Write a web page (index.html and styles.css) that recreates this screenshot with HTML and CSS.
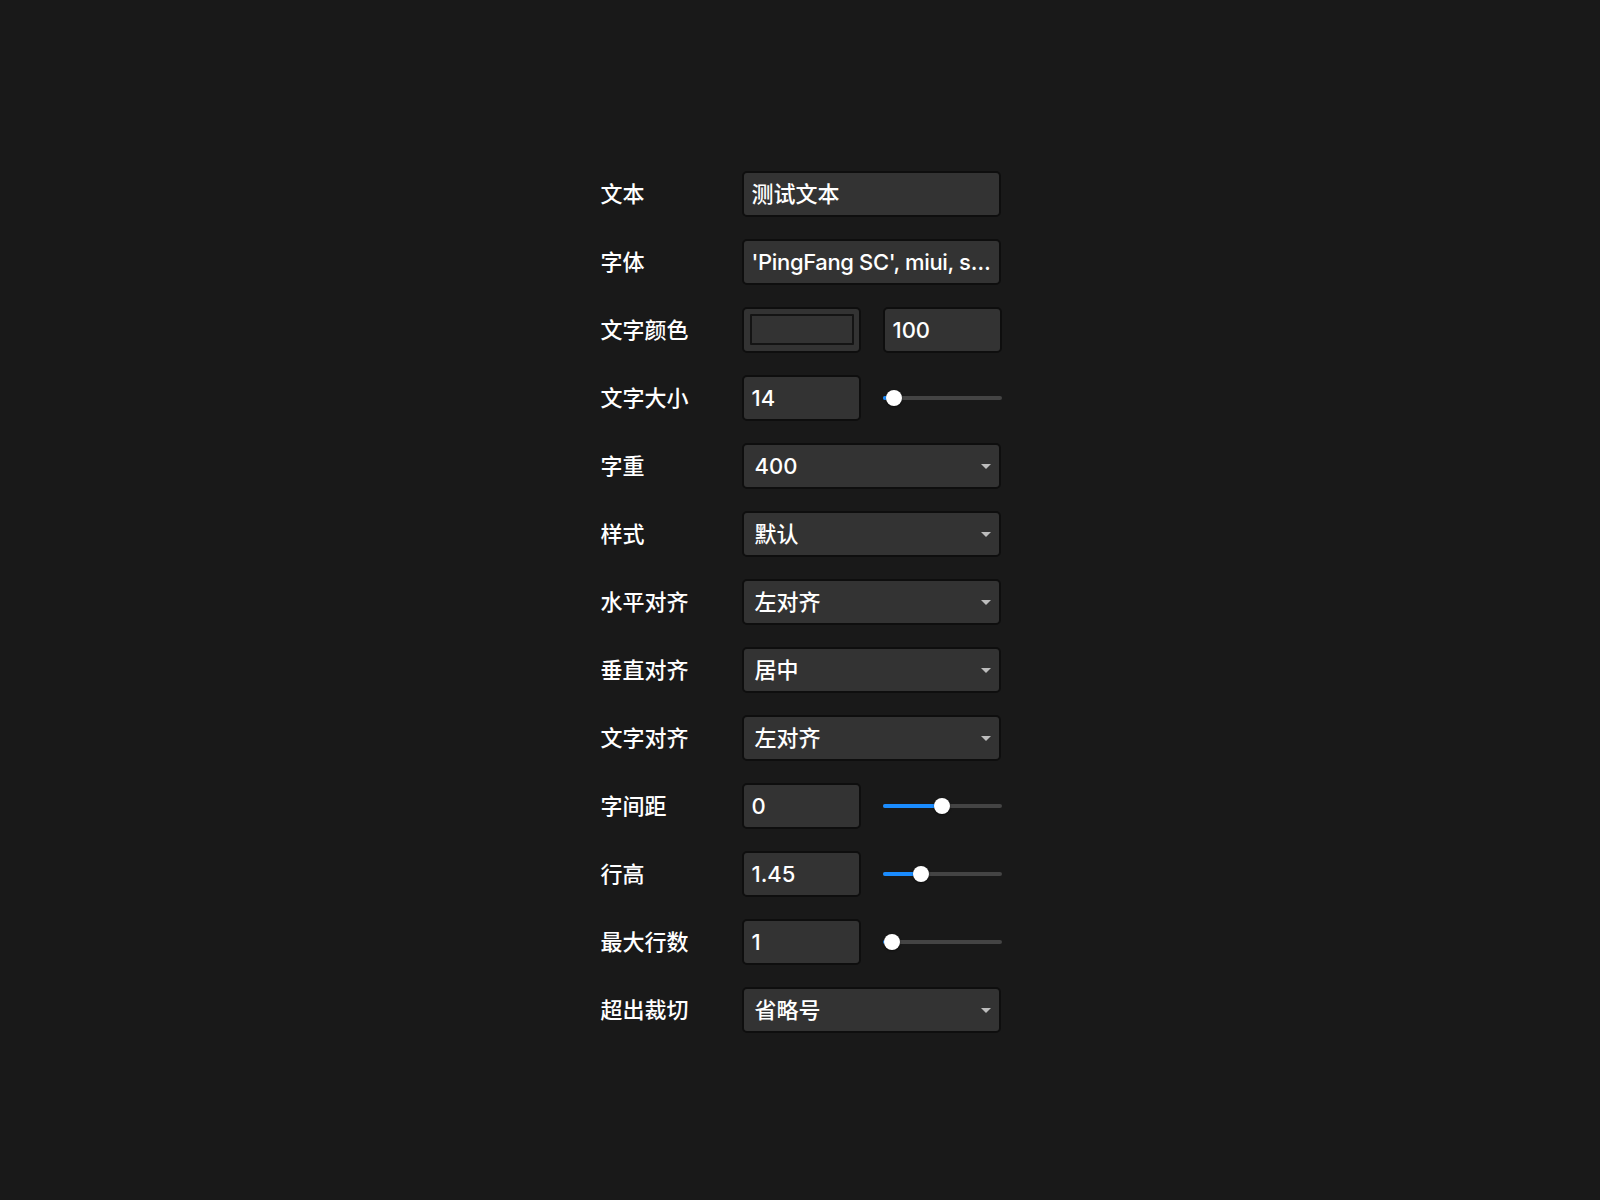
FILE: index.html
```html
<!DOCTYPE html>
<html lang="zh-CN">
<head>
<meta charset="utf-8">
<link rel="stylesheet" href="styles.css">
</head>
<body>
<div class="page">
  <div class="form">
    <div class="row"><div class="label">文本</div><div class="field"><div class="box input">测试文本</div></div></div>
    <div class="row"><div class="label">字体</div><div class="field"><div class="box input tight">'PingFang SC', miui, sans-serif</div></div></div>
    <div class="row"><div class="label">文字颜色</div><div class="field split"><div class="box swatch-box"><div class="swatch"></div></div><div class="box input">100</div></div></div>
    <div class="row"><div class="label">文字大小</div><div class="field split"><div class="box input">14</div><div class="slider" style="--p:0.03"><div class="track"><div class="fill"></div><div class="thumb"></div></div></div></div></div>
    <div class="row"><div class="label">字重</div><div class="field"><div class="box select"><span>400</span><i class="caret"></i></div></div></div>
    <div class="row"><div class="label">样式</div><div class="field"><div class="box select"><span>默认</span><i class="caret"></i></div></div></div>
    <div class="row"><div class="label">水平对齐</div><div class="field"><div class="box select"><span>左对齐</span><i class="caret"></i></div></div></div>
    <div class="row"><div class="label">垂直对齐</div><div class="field"><div class="box select"><span>居中</span><i class="caret"></i></div></div></div>
    <div class="row"><div class="label">文字对齐</div><div class="field"><div class="box select"><span>左对齐</span><i class="caret"></i></div></div></div>
    <div class="row"><div class="label">字间距</div><div class="field split"><div class="box input">0</div><div class="slider" style="--p:0.5"><div class="track"><div class="fill"></div><div class="thumb"></div></div></div></div></div>
    <div class="row"><div class="label">行高</div><div class="field split"><div class="box input">1.45</div><div class="slider" style="--p:0.3"><div class="track"><div class="fill"></div><div class="thumb"></div></div></div></div></div>
    <div class="row"><div class="label">最大行数</div><div class="field split"><div class="box input">1</div><div class="slider" style="--p:0.01"><div class="track"><div class="fill"></div><div class="thumb"></div></div></div></div></div>
    <div class="row"><div class="label">超出裁切</div><div class="field"><div class="box select"><span>省略号</span><i class="caret"></i></div></div></div>
  </div>
</div>
</body>
</html>
```
FILE: styles.css
```css
html, body {
  margin: 0;
  padding: 0;
  background: #191919;
}
body {
  font-family: "Inter", "Noto Sans CJK SC", sans-serif;
  color: #ffffff;
  font-size: 22px;
  font-weight: 500;
}
.page {
  width: 1600px;
  height: 1200px;
  display: flex;
  justify-content: center;
  padding-top: 171px;
  box-sizing: border-box;
}
.form {
  width: 400px;
  margin-left: 1px;
  display: flex;
  flex-direction: column;
  gap: 22px;
}
.row {
  display: flex;
  align-items: center;
  height: 46px;
}
.label {
  width: 141px;
  flex: none;
  white-space: nowrap;
  line-height: 1;
}
.field {
  flex: 1;
  display: flex;
  height: 46px;
  min-width: 0;
}
.field.split {
  gap: 22px;
}
.field.split > * {
  width: 119px;
  flex: none;
}
.box {
  box-sizing: border-box;
  height: 46px;
  border: 2px solid #0e0e0e;
  border-radius: 5px;
  background: #333333;
  display: flex;
  align-items: center;
  min-width: 0;
  flex: 1;
}
.input {
  padding: 0 6px 0 8px;
  white-space: nowrap;
  overflow: hidden;
  text-overflow: ellipsis;
  display: block;
  line-height: 42px;
}
.input.tight {
  letter-spacing: -0.35px;
}
.select {
  padding: 0 8px 0 11px;
  justify-content: space-between;
}
.select span {
  line-height: 42px;
  height: 42px;
}
.caret {
  width: 0;
  height: 0;
  border-left: 5px solid transparent;
  border-right: 5px solid transparent;
  border-top: 5px solid #bdbdbd;
}
.swatch-box {
  padding: 5px 5px 6px 6px;
}
.swatch {
  width: 100%;
  height: 100%;
  box-sizing: border-box;
  border: 2px solid #141414;
  background: #333333;
  border-radius: 1px;
}
.slider {
  display: flex;
  align-items: center;
}
.track {
  position: relative;
  width: 100%;
  height: 4px;
  border-radius: 2px;
  background: #444444;
}
.fill {
  position: absolute;
  left: 0;
  top: 0;
  height: 4px;
  border-radius: 2px;
  background: #1a8cff;
  width: calc(8px + var(--p) * (100% - 16px));
}
.thumb {
  position: absolute;
  top: 50%;
  left: calc(8px + var(--p) * (100% - 16px));
  width: 16px;
  height: 16px;
  border-radius: 50%;
  background: #ffffff;
  transform: translate(-50%, -50%);
  box-shadow: 0 1px 2px rgba(0,0,0,0.5);
}
```
